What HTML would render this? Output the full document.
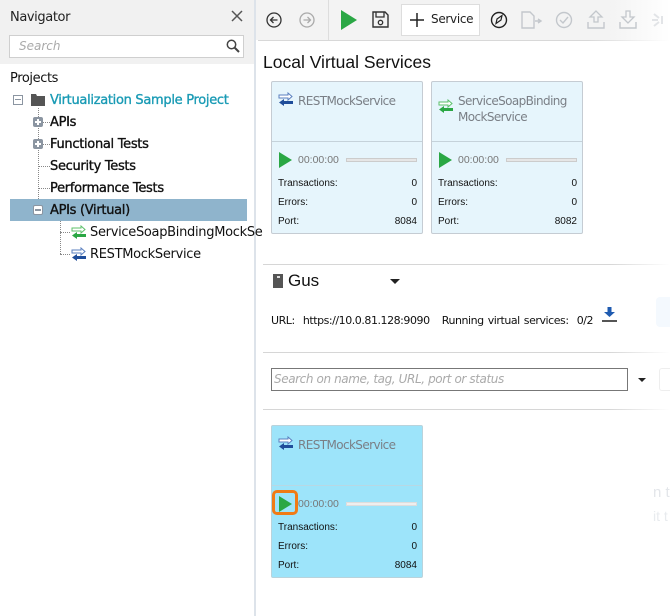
<!DOCTYPE html>
<html><head><meta charset="utf-8">
<style>
*{margin:0;padding:0;box-sizing:border-box}
body{width:670px;height:616px;overflow:hidden;background:#fff;font-family:"Liberation Sans",sans-serif;position:relative;color:#222}
.a{position:absolute}
.seg{font-family:"DejaVu Sans","Liberation Sans",sans-serif}
.tree{font-size:13px;color:#111;font-family:"DejaVu Sans",sans-serif;letter-spacing:-0.3px;-webkit-text-stroke:0.35px #111}
.dv{border-left:1px dotted #888}
.dh{border-top:1px dotted #888}
.card{position:absolute;width:152px;height:153px;border:1px solid #c5ccd3;border-radius:2px;background:#e6f5fc}
.card .title{position:absolute;left:26px;top:11px;font-size:12px;color:#7a7f86;font-family:"DejaVu Sans",sans-serif;letter-spacing:-0.6px;line-height:16px}
.card .div{position:absolute;left:0;right:0;top:59px;border-top:1px solid #c5d2da}
.card .row{position:absolute;left:6px;right:5px;font-size:10px;color:#111;display:flex;justify-content:space-between}
.card .time{position:absolute;left:26px;top:72px;font-size:10.5px;color:#777}
.card .bar{position:absolute;left:74px;right:5px;top:76px;height:4px;border:1px solid #ccc;background:#e6e6e6}
.play{position:absolute;left:7px;top:70px;width:0;height:0;border-left:13px solid #2aa744;border-top:8px solid transparent;border-bottom:8px solid transparent}
.ic{position:absolute;left:6px;top:10px}
</style></head><body>

<div class="a" style="left:0;top:0;width:254px;height:64px;background:#f1f1f1"></div>
<div class="a" style="left:10px;top:10px;font-size:13px;color:#222;font-family:'DejaVu Sans',sans-serif;letter-spacing:-0.4px">Navigator</div>
<svg class="a" style="left:231px;top:10px" width="12" height="12"><path d="M1 1L11 11M11 1L1 11" stroke="#555" stroke-width="1.5"/></svg>
<div class="a" style="left:9px;top:35px;width:235px;height:23px;border:1px solid #cfcfcf;background:#fff"></div>
<div class="a" style="left:19px;top:39px;font-size:12px;color:#aaa;font-style:italic;font-family:'DejaVu Sans',sans-serif">Search</div>
<svg class="a" style="left:226px;top:39px" width="14" height="14"><circle cx="5.5" cy="5.5" r="4.2" fill="none" stroke="#444" stroke-width="1.5"/><path d="M8.5 8.5L13 13" stroke="#444" stroke-width="2"/></svg>
<div class="a" style="left:254px;top:0;width:2px;height:616px;background:#dde3ea"></div>

<div class="a tree" style="left:10px;top:71px;-webkit-text-stroke:0;letter-spacing:-0.4px">Projects</div>
<div class="a" style="left:13px;top:95px;width:10px;height:10px;border:1px solid #8b95a1"></div>
<div class="a" style="left:15px;top:99px;width:6px;height:1px;background:#8b95a1"></div>
<svg class="a" style="left:31px;top:93px" width="14" height="13"><path d="M0 1h5l1 2h8v10H0z" fill="#555"/></svg>
<div class="a tree" style="left:50px;top:93px;color:#1a9bb5;-webkit-text-stroke:0.35px #1a9bb5">Virtualization Sample Project</div>
<div class="a dv" style="left:38px;top:108px;height:103px"></div>
<div class="a dh" style="left:38px;top:122px;width:12px"></div>
<div class="a dh" style="left:38px;top:144px;width:12px"></div>
<div class="a dh" style="left:38px;top:166px;width:12px"></div>
<div class="a dh" style="left:38px;top:188px;width:12px"></div>
<div class="a" style="left:33px;top:117px;width:10px;height:10px;background:#8b95a1;border-radius:2px"></div>
<div class="a" style="left:35px;top:121px;width:6px;height:2px;background:#fff"></div><div class="a" style="left:37px;top:119px;width:2px;height:6px;background:#fff"></div>
<div class="a" style="left:33px;top:139px;width:10px;height:10px;background:#8b95a1;border-radius:2px"></div>
<div class="a" style="left:35px;top:143px;width:6px;height:2px;background:#fff"></div><div class="a" style="left:37px;top:141px;width:2px;height:6px;background:#fff"></div>
<div class="a tree" style="left:50px;top:115px">APIs</div>
<div class="a tree" style="left:50px;top:137px">Functional Tests</div>
<div class="a tree" style="left:50px;top:159px">Security Tests</div>
<div class="a tree" style="left:50px;top:181px">Performance Tests</div>
<div class="a" style="left:10px;top:199px;width:237px;height:22px;background:#8fb4cc"></div>
<div class="a" style="left:33px;top:205px;width:10px;height:10px;background:#fff;border-radius:2px;border:1px solid #8b95a1"></div>
<div class="a" style="left:35px;top:209px;width:6px;height:2px;background:#8b95a1"></div>
<div class="a tree" style="left:50px;top:203px">APIs (Virtual)</div>
<div class="a dv" style="left:60px;top:221px;height:33px"></div>
<div class="a dh" style="left:60px;top:232px;width:10px"></div>
<div class="a dh" style="left:60px;top:254px;width:10px"></div>
<svg class="a" style="left:71px;top:225px" width="16" height="14"><path d="M1 3h9V1l4 3.5-4 3.5V6H1z" fill="#fff" stroke="#5cc06a" stroke-width="1"/><path d="M15 9H6V7l-5 3.5L6 14v-2h9z" fill="#2aa744"/></svg>
<div class="a tree" style="left:90px;top:225px;-webkit-text-stroke:0">ServiceSoapBindingMockSe</div>
<svg class="a" style="left:71px;top:247px" width="16" height="14"><path d="M1 3h9V1l4 3.5-4 3.5V6H1z" fill="#fff" stroke="#5a7fbf" stroke-width="1"/><path d="M15 9H6V7l-5 3.5L6 14v-2h9z" fill="#1f4d9a"/></svg>
<div class="a tree" style="left:90px;top:247px;-webkit-text-stroke:0">RESTMockService</div>

<div class="a" style="left:256px;top:0;width:414px;height:40px;background:linear-gradient(90deg,#f3f3f3 85%,#fff)"></div>
<div class="a" style="left:258px;top:40px;width:412px;height:1px;background:linear-gradient(90deg,#d8d8d8 80%,#fff)"></div>
<div class="a" style="left:328px;top:0;width:1px;height:40px;background:#ddd"></div>
<svg class="a" style="left:266px;top:12px" width="16" height="16"><circle cx="8" cy="8" r="7" fill="none" stroke="#333" stroke-width="1.3"/><path d="M11.5 8H5M7.5 5L4.5 8l3 3" fill="none" stroke="#333" stroke-width="1.3"/></svg>
<svg class="a" style="left:299px;top:12px" width="16" height="16"><circle cx="8" cy="8" r="7" fill="none" stroke="#aaa" stroke-width="1.3"/><path d="M4.5 8H11M8.5 5l3 3-3 3" fill="none" stroke="#aaa" stroke-width="1.3"/></svg>
<svg class="a" style="left:340px;top:10px" width="18" height="20"><path d="M1 0L17 10L1 20z" fill="#2aa744"/></svg>
<svg class="a" style="left:372px;top:11px" width="17" height="17"><path d="M1 1h12l3 3v12H1z" fill="none" stroke="#333" stroke-width="1.4"/><path d="M4 1v5h8V1" fill="none" stroke="#333" stroke-width="1.3"/><circle cx="8.5" cy="11.5" r="2.2" fill="none" stroke="#333" stroke-width="1.3"/></svg>
<div class="a" style="left:401px;top:4px;width:79px;height:32px;background:#fff;border:1px solid #ddd"></div>
<svg class="a" style="left:409px;top:12px" width="16" height="16"><path d="M8 1v14M1 8h14" stroke="#222" stroke-width="1.5"/></svg>
<div class="a" style="left:431px;top:12px;font-size:12px;color:#222;font-family:'DejaVu Sans',sans-serif;letter-spacing:-0.3px">Service</div>
<svg class="a" style="left:490px;top:11px" width="18" height="18"><circle cx="9" cy="9" r="7.5" fill="none" stroke="#222" stroke-width="1.4"/><path d="M6 12.5L7 8l5-3.5-1 4.5z" fill="none" stroke="#222" stroke-width="1.2"/></svg>
<svg class="a" style="left:521px;top:11px" width="22" height="18"><path d="M1 1h8l4 4v12H1z" fill="none" stroke="#c3c7cc" stroke-width="1.4"/><path d="M14 10h5M17 8l3 2-3 2" fill="none" stroke="#c3c7cc" stroke-width="1.4"/></svg>
<svg class="a" style="left:555px;top:11px" width="18" height="18"><circle cx="9" cy="9" r="7.5" fill="none" stroke="#c3c7cc" stroke-width="1.4"/><path d="M5 9l3 3 5-6" fill="none" stroke="#c3c7cc" stroke-width="1.4"/></svg>
<svg class="a" style="left:587px;top:10px" width="18" height="20"><path d="M9 1L3 7h4v5h4V7h4z" fill="none" stroke="#c3c7cc" stroke-width="1.3"/><path d="M1 12v6h16v-6" fill="none" stroke="#c3c7cc" stroke-width="1.4"/></svg>
<svg class="a" style="left:619px;top:10px" width="18" height="20"><path d="M9 13L3 7h4V1h4v6h4z" fill="none" stroke="#c3c7cc" stroke-width="1.3"/><path d="M1 12v6h16v-6" fill="none" stroke="#c3c7cc" stroke-width="1.4"/></svg>
<svg class="a" style="left:650px;top:10px" width="20" height="20"><path d="M4 4l5 4M4 16l5-4M2 10h6M12 6v8" stroke="#e2e4e7" stroke-width="2"/></svg>

<div class="a" style="left:263px;top:52px;font-size:17.5px;color:#111">Local Virtual Services</div>

<div class="card" style="left:271px;top:81px">
<svg class="ic" width="16" height="14"><path d="M1 3h9V1l4 3.5-4 3.5V6H1z" fill="#fff" stroke="#5a7fbf" stroke-width="1"/><path d="M15 9H6V7l-5 3.5L6 14v-2h9z" fill="#1f4d9a"/></svg>
<div class="title">RESTMockService</div><div class="div"></div>
<div class="play"></div><div class="time">00:00:00</div><div class="bar"></div>
<div class="row" style="top:96px"><span>Transactions:</span><span>0</span></div>
<div class="row" style="top:115px"><span>Errors:</span><span>0</span></div>
<div class="row" style="top:134px"><span>Port:</span><span>8084</span></div>
</div>
<div class="card" style="left:431px;top:81px">
<svg class="ic" style="top:17px" width="16" height="14"><path d="M1 3h9V1l4 3.5-4 3.5V6H1z" fill="#fff" stroke="#5cc06a" stroke-width="1"/><path d="M15 9H6V7l-5 3.5L6 14v-2h9z" fill="#2aa744"/></svg>
<div class="title">ServiceSoapBinding<br>MockService</div><div class="div"></div>
<div class="play"></div><div class="time">00:00:00</div><div class="bar"></div>
<div class="row" style="top:96px"><span>Transactions:</span><span>0</span></div>
<div class="row" style="top:115px"><span>Errors:</span><span>0</span></div>
<div class="row" style="top:134px"><span>Port:</span><span>8082</span></div>
</div>

<div class="a" style="left:263px;top:264px;width:407px;height:1px;background:linear-gradient(90deg,#d6d6d6 85%,#fff)"></div>
<div class="a" style="left:273px;top:274px;width:10px;height:14px;background:#555"></div>
<div class="a" style="left:277px;top:276px;width:3px;height:2px;background:#ddd"></div>
<div class="a" style="left:288px;top:271px;font-size:17px;color:#111">Gus</div>
<div class="a" style="left:390px;top:279px;border-left:5px solid transparent;border-right:5px solid transparent;border-top:5px solid #222"></div>
<div class="a seg" style="left:271px;top:314px;font-size:11px;color:#111;letter-spacing:-0.45px;word-spacing:1px">URL:&nbsp; https://10.0.81.128:9090&nbsp;&nbsp; Running virtual services:&nbsp; 0/2</div>
<svg class="a" style="left:602px;top:307px" width="15" height="16"><path d="M5.5 0h4v5h3.5L7.5 10 2 5h3.5z" fill="#1f5bb0"/><rect x="0" y="13" width="15" height="2" fill="#555"/></svg>
<div class="a" style="left:656px;top:297px;width:14px;height:30px;background:#f4f9fe;border-radius:4px 0 0 4px"></div>
<div class="a" style="left:263px;top:352px;width:407px;height:1px;background:linear-gradient(90deg,#d6d6d6 85%,#fff)"></div>
<div class="a" style="left:271px;top:368px;width:357px;height:23px;border:1px solid #777;background:#fff"></div>
<div class="a" style="left:274px;top:372px;font-size:12px;color:#aaa;font-style:italic;font-family:'DejaVu Sans',sans-serif;letter-spacing:-0.4px">Search on name, tag, URL, port or status</div>
<div class="a" style="left:638px;top:378px;border-left:4px solid transparent;border-right:4px solid transparent;border-top:4px solid #222"></div>
<div class="a" style="left:659px;top:368px;width:11px;height:23px;border:1px solid #eee;border-right:none;border-radius:3px 0 0 3px"></div>
<div class="a" style="left:263px;top:409px;width:407px;height:1px;background:linear-gradient(90deg,#d6d6d6 85%,#fff)"></div>

<div class="card" style="left:271px;top:425px;background:#9de4fa;border-color:#b9d3dc">
<svg class="ic" width="16" height="14"><path d="M1 3h9V1l4 3.5-4 3.5V6H1z" fill="#fff" stroke="#5a7fbf" stroke-width="1"/><path d="M15 9H6V7l-5 3.5L6 14v-2h9z" fill="#1f4d9a"/></svg>
<div class="title">RESTMockService</div><div class="div" style="border-color:#b8d8e4"></div>
<div class="a" style="left:0;top:64px;width:26px;height:25px;border:3px solid #f07b16;border-radius:5px"></div>
<div class="play"></div><div class="time" style="left:26px">00:00:00</div><div class="bar" style="border-color:#ddd;background:#eee"></div>
<div class="row" style="top:96px"><span>Transactions:</span><span>0</span></div>
<div class="row" style="top:115px"><span>Errors:</span><span>0</span></div>
<div class="row" style="top:134px"><span>Port:</span><span>8084</span></div>
</div>
<div class="a" style="left:653px;top:484px;font-size:15px;color:#e3e6ea">n t</div>
<div class="a" style="left:653px;top:508px;font-size:14px;color:#e8ebee">it t</div>
</body></html>
